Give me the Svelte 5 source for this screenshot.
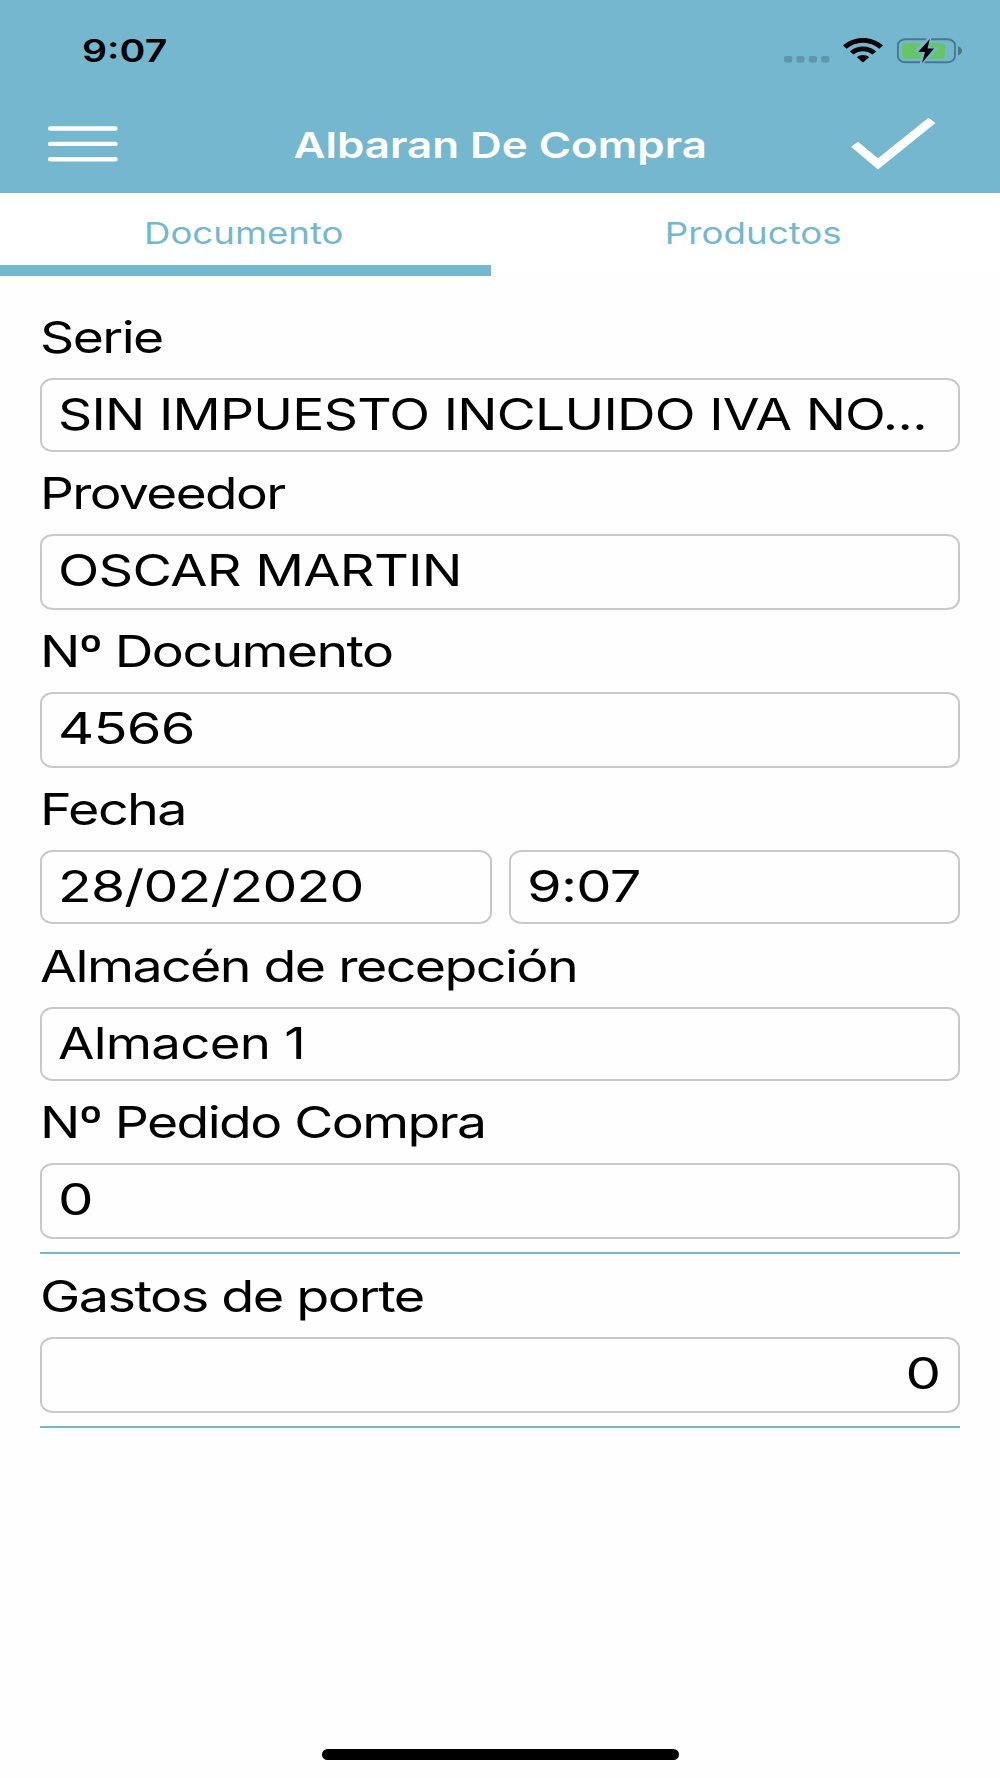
<script lang="ts">
  type Field = {
    label: string;
    values: { text: string; stretch: number }[];
    stretch: number;
    tall?: boolean;
    right?: boolean;
    ruled?: boolean;
  };

  const tabs = [
    { label: "Documento", stretch: 1.22, active: true },
    { label: "Productos", stretch: 1.224, active: false },
  ];

  const fields: Field[] = [
    {
      label: "Serie",
      stretch: 1.203,
      values: [{ text: "SIN IMPUESTO INCLUIDO IVA NO...", stretch: 1.202 }],
    },
    {
      label: "Proveedor",
      stretch: 1.195,
      values: [{ text: "OSCAR MARTIN", stretch: 1.217 }],
      tall: true,
    },
    {
      label: "Nº Documento",
      stretch: 1.206,
      values: [{ text: "4566", stretch: 1.262 }],
      tall: true,
    },
    {
      label: "Fecha",
      stretch: 1.213,
      values: [
        { text: "28/02/2020", stretch: 1.243 },
        { text: "9:07", stretch: 1.26 },
      ],
    },
    {
      label: "Almacén de recepción",
      stretch: 1.21,
      values: [{ text: "Almacen 1", stretch: 1.189 }],
    },
    {
      label: "Nº Pedido Compra",
      stretch: 1.204,
      values: [{ text: "0", stretch: 1.27 }],
      tall: true,
      ruled: true,
    },
    {
      label: "Gastos de porte",
      stretch: 1.217,
      values: [{ text: "0", stretch: 1.27 }],
      tall: true,
      right: true,
      ruled: true,
    },
  ];
</script>

<div class="screen">
  <header>
    <div class="status">
      <span class="time wide">9:07</span>
      <svg class="indicators" width="180" height="28" viewBox="0 0 180 28">
        <g fill="#5f96a9">
          <rect x="2" y="18" width="8.2" height="6.5" rx="2" />
          <rect x="14.3" y="18" width="8.2" height="6.5" rx="2" />
          <rect x="26.8" y="18" width="8.2" height="6.5" rx="2" />
          <rect x="39.2" y="18" width="8.2" height="6.5" rx="2" />
        </g>
        <g>
          <path d="M61 7.6C72-2.4 90-2.4 101 7.6L97.3 10.8C88.5 2.8 73.5 2.8 64.7 10.8Z" />
          <path d="M67.8 13.4C75 6.8 87 6.8 94.2 13.4L90.5 16.6C85.5 12 76.5 12 71.5 16.6Z" />
          <path d="M74.9 19.3C78.2 16.1 83.8 16.1 87.1 19.3L81 24.5Z" />
        </g>
        <rect x="115.9" y="1.2" width="57" height="23" rx="7.5" ry="6" fill="none" stroke="#48788a" stroke-width="1.9" />
        <path d="M176 8.2Q180 9.5 180 12.7Q180 16 176 17.3Z" fill="#48788a" />
        <rect x="120" y="5" width="43.2" height="15.7" rx="3.5" fill="#66c667" />
        <path
          d="M146.5-1L131 14.2H140L137.6 26.5H140.5L157 9.5H147.5L149.5-1Z"
          fill="#75b8cf"
        />
        <path d="M147.8 1L136.2 14H143L140 25L152 10.5H145.5Z" />
      </svg>
    </div>
    <div class="bar">
      <svg width="72" height="38" viewBox="0 0 72 38">
        <path d="M2.2 3.5H67.5M2.2 18.9H67.5M2.2 34.2H67.5" stroke="#fff" stroke-width="4.4" stroke-linecap="round" />
      </svg>
      <h1><span class="wide">Albaran De Compra</span></h1>
      <svg width="86" height="54" viewBox="0 0 86 54">
        <path d="M1 29.7L8 24.7L28 41.3L78.5 0.7L85.5 5.9L28 52.6Z" fill="#fff" />
      </svg>
    </div>
  </header>

  <nav>
    {#each tabs as tab (tab.label)}
      <div class="tab" class:active={tab.active}>
        <span class="wide" style:--stretch={tab.stretch}>{tab.label}</span>
      </div>
    {/each}
  </nav>

  <main>
    {#each fields as field (field.label)}
      <section class:ruled={field.ruled}>
        <div class="label">
          <span class="wide" style:--stretch={field.stretch}>{field.label}</span>
        </div>
        <div class="row">
          {#each field.values as value (value.text)}
            <div class="box" class:tall={field.tall} class:right={field.right}>
              <span class="wide" style:--stretch={value.stretch}>{value.text}</span>
            </div>
          {/each}
        </div>
      </section>
    {/each}
  </main>

  <footer><i></i></footer>
</div>

<style>
  :global(body) {
    background: #fefefe;
  }

  .screen {
    width: 1000px;
    height: 1778px;
    display: flex;
    flex-direction: column;
    overflow: hidden;
    font-family: Inter, "Liberation Sans", sans-serif;
    color: #000;
  }

  /* the typeface is set wider than it is drawn */
  .wide {
    display: inline-block;
    white-space: nowrap;
    transform: scaleX(var(--stretch, 1.2));
    transform-origin: left;
  }

  header {
    height: 193px;
    box-sizing: border-box;
    background: #75b7cf;
    border-bottom: 1px solid #78b3c8;
  }

  .status {
    height: 100px;
    display: flex;
    justify-content: space-between;
    padding: 0 38px 0 82px;
  }

  .time {
    --stretch: 1.265;
    font-size: 31px;
    font-weight: 600;
    line-height: 101px;
  }

  .indicators {
    margin-top: 37.5px;
  }

  .bar {
    height: 92px;
    display: flex;
    align-items: flex-start;
    padding: 0 64px 0 48px;
  }

  .bar svg:first-child {
    margin-top: 25px;
  }

  .bar svg:last-child {
    margin-top: 17px;
  }

  h1 {
    flex: 1;
    margin: 0;
    padding-left: 31px;
    text-align: center;
    font-size: 35.5px;
    font-weight: 600;
    line-height: 91px;
    color: #fff;
  }

  h1 .wide {
    --stretch: 1.236;
    transform-origin: center;
  }

  nav {
    display: grid;
    grid-template-columns: 491px 491px;
    justify-content: space-between;
    height: 83px;
    background: #fff;
  }

  .tab {
    height: 83px;
    box-sizing: border-box;
    padding-right: 3px;
    border-bottom: 11px solid transparent;
    text-align: center;
    font-size: 30px;
    line-height: 80px;
    color: #75b7cf;
  }

  .tab .wide {
    transform-origin: center;
  }

  .active {
    border-color: #75b7cf;
  }

  main {
    flex: 1;
    padding: 20px 40px 0;
  }

  section:nth-child(4) {
    padding-bottom: 1px;
  }

  .label {
    height: 82px;
    font-size: 44.4px;
    line-height: 82px;
    letter-spacing: -1.3px;
  }

  .row {
    display: flex;
    gap: 17px;
  }

  .box {
    flex: 1;
    height: 74px;
    box-sizing: border-box;
    padding: 0 18px 0 16px;
    border: 2px solid #c9c9c9;
    border-radius: 13px / 11px;
    font-size: 44.4px;
    line-height: 68px;
    letter-spacing: -0.6px;
  }

  .tall {
    height: 76px;
  }

  .right {
    text-align: right;
  }

  .right .wide {
    transform-origin: right;
  }

  .ruled {
    padding-bottom: 13px;
    margin-bottom: 1px;
    border-bottom: 2px solid #75b7cf;
  }

  footer {
    display: flex;
    justify-content: center;
    height: 29px;
  }

  footer i {
    width: 357px;
    height: 11px;
    border-radius: 6px;
    background: #000;
  }
</style>
